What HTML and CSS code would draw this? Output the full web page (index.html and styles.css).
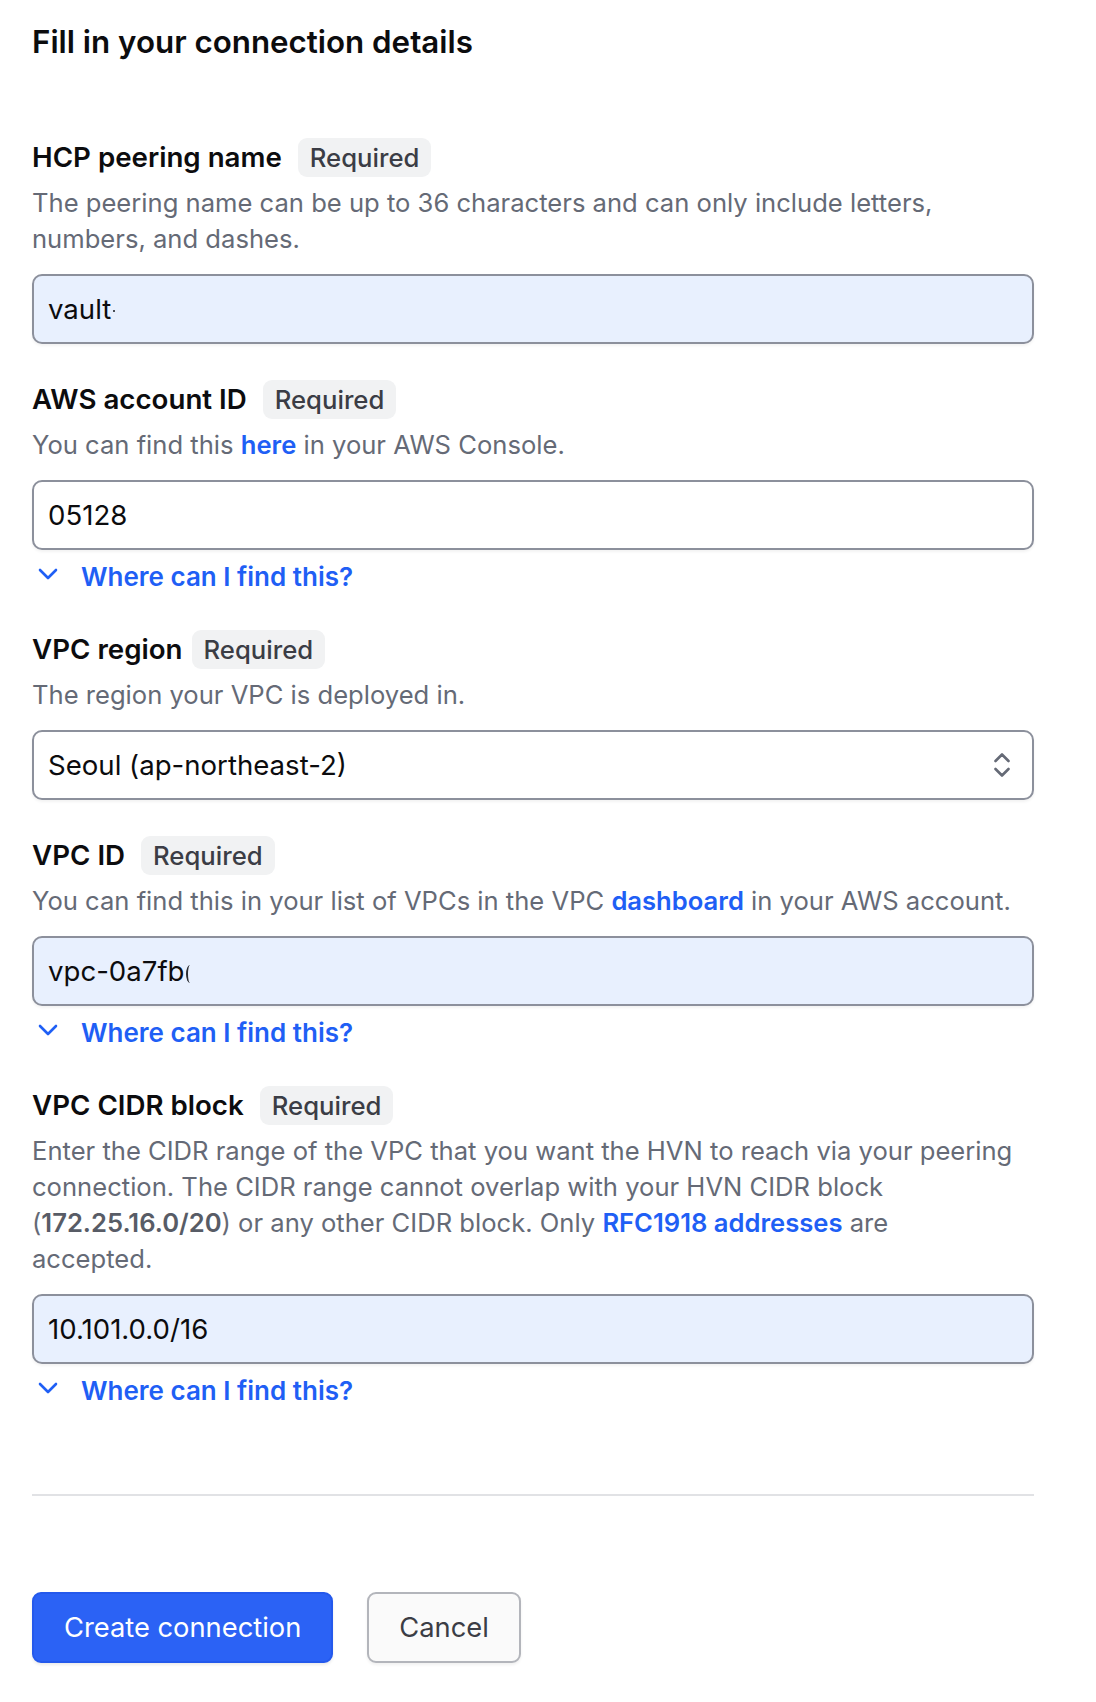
FILE: index.html
```html
<!DOCTYPE html>
<html lang="en">
<head>
<meta charset="utf-8">
<title>Fill in your connection details</title>
<link rel="stylesheet" href="styles.css">
</head>
<body>
<div class="page">
  <h1 class="title">Fill in your connection details</h1>

  <div class="form">
    <div class="field">
      <div class="label-row"><span class="label">HCP peering name</span><span class="badge">Required</span></div>
      <p class="help">The peering name can be up to 36 characters and can only include letters, numbers, and dashes.</p>
      <div class="input filled">vault<span class="mark-dash" aria-hidden="true"></span></div>
    </div>

    <div class="field">
      <div class="label-row"><span class="label">AWS account ID</span><span class="badge">Required</span></div>
      <p class="help">You can find this <a class="link" href="#">here</a> in your AWS Console.</p>
      <div class="input">05128</div>
      <a class="disclosure" href="#">
        <svg class="chev" viewBox="0 0 20 12" width="20" height="12" aria-hidden="true"><path d="M2 2 L10 10 L18 2" fill="none" stroke="currentColor" stroke-width="2.6" stroke-linecap="round" stroke-linejoin="round"/></svg>
        <span>Where can I find this?</span>
      </a>
    </div>

    <div class="field">
      <div class="label-row tight"><span class="label">VPC region</span><span class="badge">Required</span></div>
      <p class="help">The region your VPC is deployed in.</p>
      <div class="input select">
        <span>Seoul (ap-northeast-2)</span>
        <svg class="updown" viewBox="0 0 18 28" width="18" height="28" aria-hidden="true"><path d="M2.5 10 L9 3.5 L15.5 10 M2.5 18 L9 24.5 L15.5 18" fill="none" stroke="currentColor" stroke-width="2.6" stroke-linecap="round" stroke-linejoin="round"/></svg>
      </div>
    </div>

    <div class="field">
      <div class="label-row"><span class="label">VPC ID</span><span class="badge">Required</span></div>
      <p class="help">You can find this in your list of VPCs in the VPC <a class="link" href="#">dashboard</a> in your AWS account.</p>
      <div class="input filled">vpc-0a7fb<span class="mark-arc" aria-hidden="true"></span></div>
      <a class="disclosure" href="#">
        <svg class="chev" viewBox="0 0 20 12" width="20" height="12" aria-hidden="true"><path d="M2 2 L10 10 L18 2" fill="none" stroke="currentColor" stroke-width="2.6" stroke-linecap="round" stroke-linejoin="round"/></svg>
        <span>Where can I find this?</span>
      </a>
    </div>

    <div class="field">
      <div class="label-row"><span class="label">VPC CIDR block</span><span class="badge">Required</span></div>
      <p class="help">Enter the CIDR range of the VPC that you want the HVN to reach via your peering connection. The CIDR range cannot overlap with your HVN CIDR block (<strong class="strong">172.25.16.0/20</strong>) or any other CIDR block. Only <a class="link" href="#">RFC1918 addresses</a> are<br>accepted.</p>
      <div class="input filled">10.101.0.0/16</div>
      <a class="disclosure" href="#">
        <svg class="chev" viewBox="0 0 20 12" width="20" height="12" aria-hidden="true"><path d="M2 2 L10 10 L18 2" fill="none" stroke="currentColor" stroke-width="2.6" stroke-linecap="round" stroke-linejoin="round"/></svg>
        <span>Where can I find this?</span>
      </a>
    </div>
  </div>

  <hr class="divider">

  <div class="actions">
    <button class="btn primary" type="button">Create connection</button>
    <button class="btn secondary" type="button">Cancel</button>
  </div>
</div>
</body>
</html>
```

FILE: styles.css
```css
* { box-sizing: border-box; }

html, body {
  margin: 0;
  padding: 0;
  background: #ffffff;
}

body {
  font-family: Inter, "Noto Sans", "Liberation Sans", sans-serif;
  color: #0c0c0e;
}

.page {
  width: 1096px;
  padding: 22px 62px 40px 32px;
}

.title {
  margin: 0;
  font-size: 31.3px;
  line-height: 40px;
  font-weight: 600;
  color: #0c0c0e;
}

.form {
  margin-top: 76px;
  display: flex;
  flex-direction: column;
  gap: 36px;
}

.field {
  display: flex;
  flex-direction: column;
}

.label-row {
  display: flex;
  align-items: center;
  gap: 16px;
  height: 39px;
}

.label-row.tight { gap: 9px; }

.label {
  font-size: 27.7px;
  font-weight: 600;
  line-height: 39px;
  color: #0c0c0e;
}

.badge {
  display: inline-flex;
  align-items: center;
  height: 39px;
  padding: 0 12px;
  border-radius: 9px;
  background: #f1f2f3;
  color: #3b3d45;
  font-size: 25.7px;
  font-weight: 500;
}

.help {
  margin: 8px 0 0;
  max-width: 986px;
  font-size: 25.6px;
  line-height: 36px;
  color: #656a76;
}

.link {
  color: #1f5ff5;
  font-weight: 600;
  text-decoration: none;
}

.strong {
  font-weight: 600;
  color: #585c66;
}

.input {
  margin-top: 17px;
  height: 70px;
  display: flex;
  align-items: center;
  padding: 0 14px;
  border: 2px solid #8c909c;
  border-radius: 10px;
  background: #ffffff;
  font-size: 27.6px;
  color: #0c0c0e;
  box-shadow: 0 2px 3px rgba(0, 0, 0, 0.05);
  white-space: nowrap;
}

.input.filled {
  background: #e8f0fe;
}

.mark-dash {
  display: inline-block;
  width: 2px;
  height: 2px;
  margin: 4px 0 0 2px;
  background: #4a4d55;
}

.mark-arc {
  display: inline-block;
  width: 8px;
  height: 18px;
  margin: 6px 0 0 1px;
  border-left: 2px solid #2a2c31;
  border-radius: 50% 0 0 50%;
}

.select {
  justify-content: space-between;
  padding-right: 21px;
}

.updown {
  color: #656a76;
  display: block;
}

.disclosure {
  margin-top: 8px;
  height: 36px;
  display: flex;
  align-items: center;
  gap: 23px;
  padding-left: 6px;
  color: #1f5ff5;
  font-size: 26px;
  font-weight: 600;
  text-decoration: none;
  align-self: flex-start;
}

.chev {
  display: block;
  margin-top: -4px;
}

.divider {
  margin: 86px 0 0;
  border: 0;
  height: 2px;
  background: #e1e2e5;
}

.actions {
  margin-top: 96px;
  display: flex;
  gap: 34px;
}

.btn {
  height: 71px;
  padding: 0 30px;
  border-radius: 9px;
  font-family: Inter, "Noto Sans", "Liberation Sans", sans-serif;
  font-size: 27.3px;
  font-weight: 400;
  cursor: pointer;
}

.btn.primary {
  background: #2b62f5;
  border: 2px solid #2459ec;
  color: #ffffff;
  box-shadow: 0 2px 3px rgba(0, 0, 0, 0.08);
}

.btn.secondary {
  background: #fafafa;
  border: 2px solid #b3b5bb;
  color: #3b3d45;
  box-shadow: 0 2px 3px rgba(0, 0, 0, 0.06);
}
```
